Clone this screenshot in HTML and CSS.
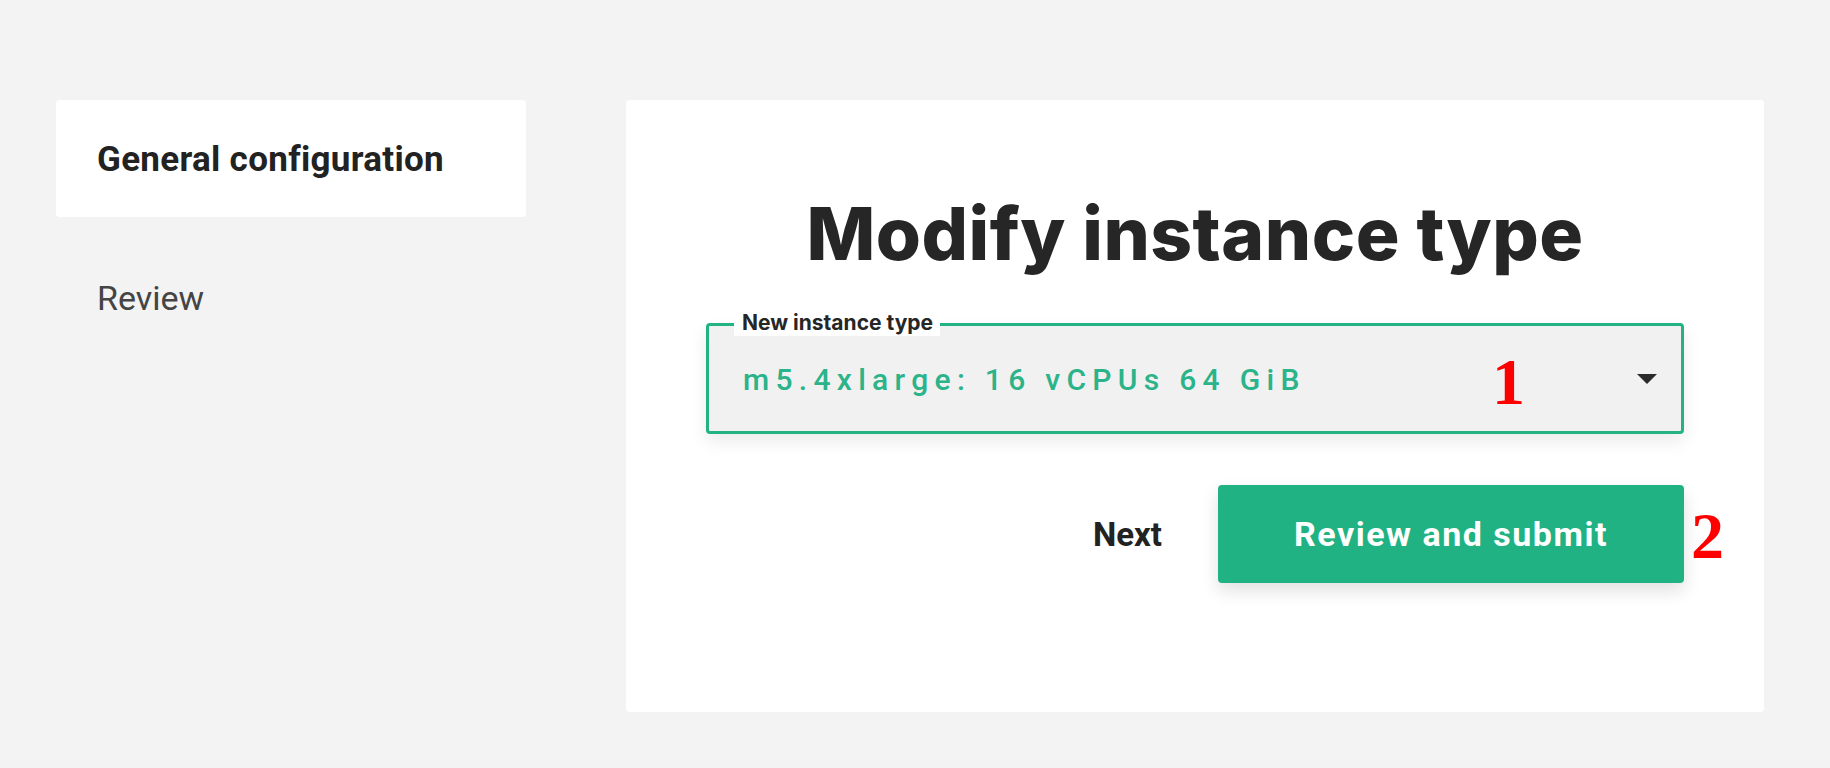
FILE: index.html
```html
<!DOCTYPE html>
<html lang="en">
<head>
<meta charset="utf-8">
<title>Modify instance type</title>
<link rel="stylesheet" href="styles.css">
</head>
<body>
<div class="page">
  <nav class="steps">
    <div class="step step-active">General configuration</div>
    <div class="step">Review</div>
  </nav>
  <main class="card">
    <h1 class="title">Modify instance type</h1>
    <div class="field">
      <span class="field-label">New instance type</span>
      <span class="field-value">m5.4xlarge: 16 vCPUs 64 GiB</span>
      <svg class="field-arrow" width="20" height="10" viewBox="0 0 20 10"><polygon points="0,0 20,0 10,10" fill="#2a2a2a"/></svg>
      <span class="marker marker-1">1</span>
    </div>
    <div class="actions">
      <span class="next">Next</span>
      <button class="submit" type="button">Review and submit</button>
      <span class="marker marker-2">2</span>
    </div>
  </main>
</div>
</body>
</html>
```
FILE: styles.css
```css
html, body {
  margin: 0;
  padding: 0;
  background: #f3f3f3;
}
body {
  font-family: Roboto, "Liberation Sans", sans-serif;
  color: #222222;
}
.page {
  display: flex;
  align-items: flex-start;
  gap: 100px;
  padding: 100px 0 0 56px;
}
.steps {
  width: 470px;
  display: flex;
  flex-direction: column;
  gap: 22px;
  flex: none;
}
.step {
  height: 117px;
  display: flex;
  align-items: center;
  padding-left: 41px;
  font-size: 34px;
  color: #444444;
  border-radius: 4px;
}
.step-active {
  background: #ffffff;
  font-weight: 700;
  font-size: 35px;
  letter-spacing: 0.3px;
  color: #222222;
  padding-top: 2px;
  box-sizing: border-box;
}
.card {
  width: 1138px;
  height: 612px;
  box-sizing: border-box;
  background: #ffffff;
  border-radius: 4px;
  padding: 90px 80px 0;
  flex: none;
}
.title {
  margin: 0;
  text-align: center;
  font-family: Inter, "Liberation Sans", sans-serif;
  font-weight: 800;
  font-size: 73px;
  line-height: 88px;
  letter-spacing: 0.5px;
  color: #262626;
}
.field {
  position: relative;
  margin-top: 45px;
  height: 111px;
  box-sizing: border-box;
  border: 3px solid #22b284;
  border-radius: 4px;
  background: #f1f1f1;
  box-shadow: 0 8px 18px rgba(0, 0, 0, 0.08);
  display: flex;
  align-items: center;
  padding: 2px 24px 0 34px;
}
.field-label {
  position: absolute;
  left: 25px;
  top: -16px;
  padding: 0 7px 0 8px;
  background: #ffffff;
  font-family: Inter, "Liberation Sans", sans-serif;
  font-weight: 700;
  font-size: 21px;
  line-height: 26px;
  color: #262626;
}
.field-value {
  flex: 1;
  font-family: Roboto, "Liberation Sans", sans-serif;
  font-weight: 500;
  font-size: 30px;
  letter-spacing: 6.3px;
  color: #2bb389;
}
.field-arrow {
  display: block;
  margin-top: -2px;
}
.marker {
  position: absolute;
  font-family: "Liberation Serif", serif;
  font-weight: 700;
  color: #ff0000;
  line-height: 1;
}
.marker-1 {
  left: 783px;
  top: 23px;
  font-size: 66px;
}
.actions {
  position: relative;
  margin-top: 51px;
  display: flex;
  justify-content: flex-end;
  align-items: center;
  gap: 56px;
}
.next {
  font-weight: 700;
  font-size: 33px;
  color: #222222;
}
.submit {
  width: 466px;
  height: 98px;
  border: none;
  border-radius: 4px;
  background: #20b282;
  color: #ffffff;
  font-family: Roboto, "Liberation Sans", sans-serif;
  font-weight: 700;
  font-size: 34px;
  letter-spacing: 1.5px;
  box-shadow: 0 8px 18px rgba(0, 0, 0, 0.12);
  padding: 0;
}
.marker-2 {
  right: -40px;
  top: 18px;
  font-size: 66px;
}
```
